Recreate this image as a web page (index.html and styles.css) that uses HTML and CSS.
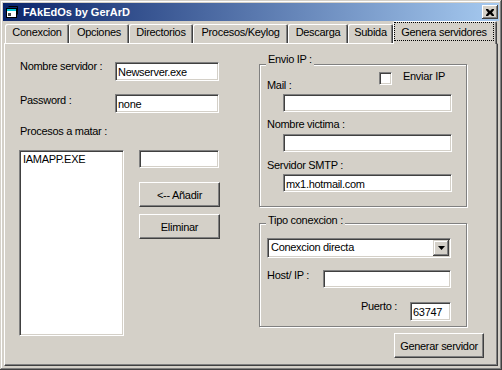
FILE: index.html
```html
<!DOCTYPE html>
<html lang="es">
<head>
    <meta charset="UTF-8">
    <title>FAkEdOs by GerArD</title>
    <link rel="stylesheet" href="styles.css">
</head>
<body>
    <div class="window">
        <div class="titlebar">
            <svg class="app-icon" width="16" height="16" viewBox="0 0 16 16">
                <path d="M4.5 2.5h9v8" fill="none" stroke="#000"/>
                <rect x="2.5" y="4.5" width="10" height="9" fill="#fff" stroke="#000"/>
                <rect x="3" y="5" width="9" height="2" fill="#00c8d8"/>
                <rect x="4" y="9" width="3" height="3" fill="#4a4a4a"/>
            </svg>
            <span class="title">FAkEdOs by GerArD</span>
            <div class="close-btn">
                <svg width="8" height="7" viewBox="0 0 8 7">
                    <path d="M0 0h2l2 2 2-2h2v1l-2 2.5 2 2.5v1h-2l-2-2-2 2h-2v-1l2-2.5-2-2.5z" fill="#000"/>
                </svg>
            </div>
        </div>

        <div class="tabs">
            <div class="tab tab-con">Conexcion</div>
            <div class="tab tab-opc">Opciones</div>
            <div class="tab tab-dir">Directorios</div>
            <div class="tab tab-pro">Procesos/Keylog</div>
            <div class="tab tab-des">Descarga</div>
            <div class="tab tab-sub">Subida</div>
            <div class="tab tab-gen active"><span class="focus">Genera servidores</span></div>
        </div>

        <div class="panel">
            <div class="col-left">
                <div class="row row-name">
                    <label class="lbl lbl-wide">Nombre servidor :</label>
                    <input class="field field-name" type="text" value="Newserver.exe">
                </div>
                <div class="row row-pass">
                    <label class="lbl lbl-wide">Password :</label>
                    <input class="field field-pass" type="text" value="none">
                </div>
                <div class="lbl lbl-procs">Procesos a matar :</div>
                <div class="procs">
                    <div class="listbox">
                        <div class="list-item">IAMAPP.EXE</div>
                    </div>
                    <div class="procs-side">
                        <input class="field field-proc" type="text" value="">
                        <button class="btn btn-add">&lt;-- Añadir</button>
                        <button class="btn btn-del">Eliminar</button>
                    </div>
                </div>
            </div>

            <div class="col-right">
                <fieldset class="group group-ip">
                    <legend>Envio IP :</legend>
                    <div class="ip-head">
                        <label class="lbl lbl-mail">Mail :</label>
                        <div class="check-wrap">
                            <span class="check"></span>
                            <span class="check-text">Enviar IP</span>
                        </div>
                    </div>
                    <input class="field field-ip field-mail" type="text" value="">
                    <div class="lbl lbl-group">Nombre victima :</div>
                    <input class="field field-ip field-next" type="text" value="">
                    <div class="lbl lbl-group lbl-smtp">Servidor SMTP :</div>
                    <input class="field field-ip field-smtp" type="text" value="mx1.hotmail.com">
                </fieldset>

                <fieldset class="group group-con">
                    <legend>Tipo conexcion :</legend>
                    <div class="combo">
                        <span class="combo-text">Conexcion directa</span>
                        <span class="combo-btn">
                            <svg width="7" height="4" viewBox="0 0 7 4"><path d="M0 0h7l-3.5 4z" fill="#000"/></svg>
                        </span>
                    </div>
                    <div class="row row-host">
                        <label class="lbl lbl-host">Host/ IP :</label>
                        <input class="field field-host" type="text" value="">
                    </div>
                    <div class="row row-port">
                        <label class="lbl">Puerto :</label>
                        <input class="field field-port" type="text" value="63747">
                    </div>
                </fieldset>

                <button class="btn btn-gen">Generar servidor</button>
            </div>
        </div>
    </div>
</body>
</html>
```

FILE: styles.css
```css
body {
    margin: 0;
    background-color: #d4d0c8;
    font-family: "Liberation Sans", Arial, sans-serif;
    font-size: 11px;
    letter-spacing: -0.3px;
    color: #000;
}

.window {
    width: 502px;
    height: 370px;
    box-sizing: border-box;
    padding: 3px;
    background-color: #d4d0c8;
    box-shadow: inset -1px -1px #404040, inset 1px 1px #d4d0c8, inset -2px -2px #808080, inset 2px 2px #fff;
    display: flex;
    flex-direction: column;
}

/* title bar */
.titlebar {
    flex: none;
    height: 18px;
    display: flex;
    align-items: center;
    padding: 0 1px;
    background: linear-gradient(to right, #0a246a, #a6caf0);
}

.app-icon {
    flex: none;
}

.title {
    margin-left: 3px;
    color: #fff;
    font-weight: bold;
    letter-spacing: 0;
    line-height: 13px;
}

.close-btn {
    margin-left: auto;
    width: 16px;
    height: 14px;
    box-sizing: border-box;
    background-color: #d4d0c8;
    box-shadow: inset -1px -1px #404040, inset 1px 1px #fff, inset -2px -2px #808080;
    display: flex;
    align-items: center;
    justify-content: center;
}

/* tabs */
.tabs {
    flex: none;
    height: 22px;
    display: flex;
    align-items: flex-end;
    padding-left: 2px;
}

.tab {
    box-sizing: border-box;
    height: 19px;
    padding-top: 2px;
    line-height: 13px;
    text-align: center;
    border-top-left-radius: 2px;
    border-top-right-radius: 2px;
    box-shadow: inset 1px 1px #fff, inset -1px 0 #404040, inset -2px 0 #808080;
    white-space: nowrap;
}

.tab-con { width: 64px; }
.tab-opc { width: 60px; }
.tab-dir { width: 64px; }
.tab-pro { width: 95px; }
.tab-des { width: 60px; }
.tab-sub { width: 45px; }

.tab.active {
    width: 104px;
    height: 23px;
    margin-bottom: -1px;
    padding: 1px 3px 0 1px;
    z-index: 1;
    background-color: #d4d0c8;
}

.focus {
    display: block;
    height: 19px;
    box-sizing: border-box;
    padding-top: 3px;
    border: 1px dotted #000;
}

/* tab page */
.panel {
    flex: none;
    height: 323px;
    margin: 0 1px;
    box-sizing: border-box;
    border: 1px solid;
    border-color: #fff #404040 #404040 #fff;
    box-shadow: inset -1px -1px #808080;
    display: flex;
    align-items: flex-start;
}

.lbl {
    display: block;
    line-height: 13px;
    white-space: nowrap;
}

.row {
    display: flex;
    align-items: flex-start;
}

.field {
    box-sizing: border-box;
    height: 19px;
    margin: 0;
    padding: 2px 1px 2px 2px;
    border: 1px solid;
    border-color: #808080 #fff #fff #808080;
    box-shadow: inset 1px 1px #404040, inset -1px -1px #d4d0c8;
    background-color: #fff;
    font: inherit;
    letter-spacing: inherit;
    line-height: 13px;
    color: #000;
    outline: none;
}

.btn {
    box-sizing: border-box;
    margin: 0;
    padding: 0;
    border: 1px solid;
    border-color: #fff #404040 #404040 #fff;
    box-shadow: inset -1px -1px #808080;
    background-color: #d4d0c8;
    font: inherit;
    letter-spacing: inherit;
    color: #000;
}

/* left column */
.col-left {
    width: 220px;
    margin: 16px 0 0 14px;
}

.lbl-wide {
    width: 95px;
    margin-left: 1px;
}

.field-name {
    width: 104px;
    margin-top: 2px;
}

.row-pass {
    margin-top: 13px;
}

.field-pass {
    width: 104px;
}

.lbl-procs {
    margin: 12px 0 0 1px;
}

.procs {
    display: flex;
    align-items: flex-start;
    margin-top: 12px;
}

.listbox {
    width: 105px;
    height: 186px;
    box-sizing: border-box;
    padding: 2px 3px;
    border: 1px solid;
    border-color: #808080 #fff #fff #808080;
    box-shadow: inset 1px 1px #404040, inset -1px -1px #d4d0c8;
    background-color: #fff;
}

.list-item {
    line-height: 13px;
}

.procs-side {
    display: flex;
    flex-direction: column;
    margin-left: 15px;
}

.field-proc {
    width: 80px;
    height: 18px;
}

.btn-add,
.btn-del {
    width: 81px;
    height: 25px;
}

.btn-add {
    margin-top: 14px;
}

.btn-del {
    margin-top: 7px;
}

/* right column */
.col-right {
    width: 225px;
    margin: 9px 0 0 20px;
    display: flex;
    flex-direction: column;
}

.group {
    width: 208px;
    min-width: 0;
    box-sizing: border-box;
    margin: 0;
    padding: 0 0 14px;
    border: 1px solid #808080;
    box-shadow: 1px 1px #fff, inset 1px 1px #fff;
}

.group legend {
    margin-left: 6px;
    padding: 0 2px 5px;
    line-height: 13px;
    background-color: #d4d0c8;
}

.group-ip legend {
    padding-bottom: 9px;
}

.ip-head {
    display: flex;
    align-items: flex-start;
}

.lbl-mail {
    width: 112px;
    margin: 4px 0 0 7px;
}

.check-wrap {
    display: flex;
    align-items: flex-start;
    margin-top: -3px;
}

.check {
    width: 13px;
    height: 13px;
    box-sizing: border-box;
    border: 1px solid;
    border-color: #808080 #fff #fff #808080;
    box-shadow: inset 1px 1px #404040, inset -1px -1px #d4d0c8;
    background-color: #fff;
}

.check-text {
    margin: -2px 0 0 11px;
    line-height: 13px;
}

.field-ip {
    width: 169px;
    height: 18px;
    margin-left: 23px;
    padding-bottom: 1px;
}

.field-mail {
    margin-top: 2px;
}

.lbl-group {
    margin: 6px 0 0 7px;
}

.lbl-smtp {
    margin-top: 7px;
}

.field-next {
    margin-top: 3px;
}

.field-smtp {
    margin-top: 2px;
}

.group-con {
    margin-top: 7px;
    padding-bottom: 5px;
}

.combo {
    width: 184px;
    height: 20px;
    box-sizing: border-box;
    margin: 6px 0 0 7px;
    padding: 1px;
    border: 1px solid;
    border-color: #808080 #fff #fff #808080;
    box-shadow: inset 1px 1px #404040, inset -1px -1px #d4d0c8;
    background-color: #fff;
    display: flex;
    align-items: flex-start;
}

.combo-text {
    margin: 1px 0 0 2px;
    line-height: 13px;
}

.combo-btn {
    margin-left: auto;
    width: 16px;
    height: 16px;
    box-sizing: border-box;
    background-color: #d4d0c8;
    box-shadow: inset -1px -1px #404040, inset 1px 1px #d4d0c8, inset -2px -2px #808080, inset 2px 2px #fff;
    display: flex;
    align-items: center;
    justify-content: center;
}

.row-host {
    margin-top: 11px;
}

.lbl-host {
    width: 56px;
    margin-left: 7px;
}

.field-host {
    width: 128px;
    height: 18px;
    margin-top: 1px;
    padding-bottom: 1px;
}

.row-port {
    justify-content: flex-end;
    margin: 12px 15px 0 0;
}

.field-port {
    width: 41px;
    margin: 2px 0 0 13px;
}

.btn-gen {
    align-self: flex-end;
    width: 90px;
    height: 25px;
    margin-top: 6px;
}
```
